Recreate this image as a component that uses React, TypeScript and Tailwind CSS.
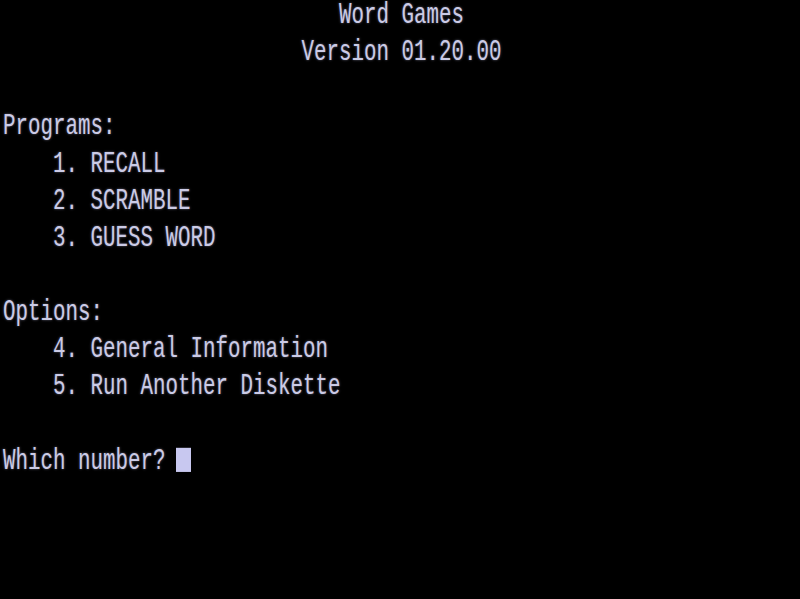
const lines: { text: string; center?: boolean; cursor?: boolean }[] = [
  { text: "Word Games", center: true },
  { text: "Version 01.20.00", center: true },
  { text: "" },
  { text: "Programs:" },
  { text: "    1. RECALL" },
  { text: "    2. SCRAMBLE" },
  { text: "    3. GUESS WORD" },
  { text: "" },
  { text: "Options:" },
  { text: "    4. General Information" },
  { text: "    5. Run Another Diskette" },
  { text: "" },
  { text: "Which number? ", cursor: true },
];

export default function App() {
  return (
    <div className="w-[800px] h-[599px] bg-black overflow-hidden font-['Liberation_Mono',monospace] text-[20.83px] text-[#cbcbe6] [text-shadow:0_0_2px_rgba(200,200,240,0.5)]">
      <div className="pl-[3px]">
        {lines.map((line, i) => (
          <div
            key={i}
            className={`h-[37.15px] whitespace-pre ${line.center ? "text-center" : ""}`}
          >
            <span className="inline-block leading-[24px] scale-y-[1.42]">
              {line.text}
              {line.cursor && (
                <span className="inline-block align-middle w-[15px] h-[17px] -ml-[2px] -translate-y-[1px] bg-[#c8c8f0]"></span>
              )}
            </span>
          </div>
        ))}
      </div>
    </div>
  );
}
